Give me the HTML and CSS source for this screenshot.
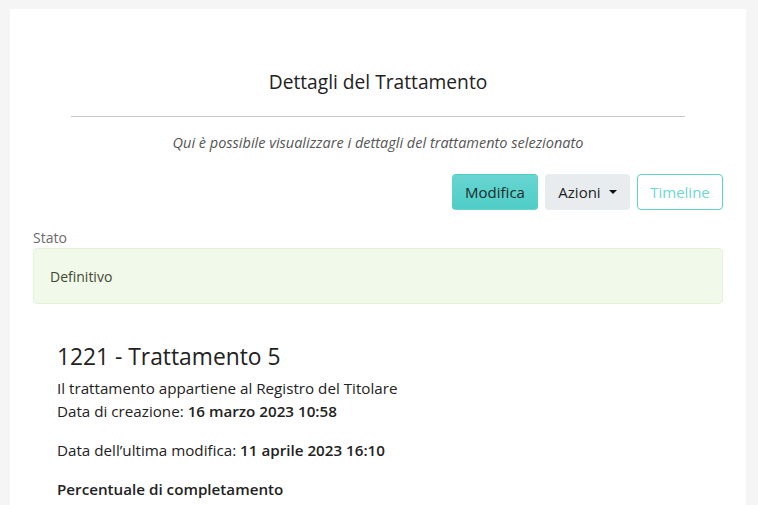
FILE: index.html
```html
<!DOCTYPE html>
<html lang="it">
<head>
<meta charset="utf-8">
<title>Dettagli del Trattamento</title>
<link rel="stylesheet" href="styles.css">
</head>
<body>
<div class="page">
  <div class="card">
    <div class="header">
      <h1 class="title">Dettagli del Trattamento</h1>
      <hr class="divider">
      <p class="subtitle">Qui è possibile visualizzare i dettagli del trattamento selezionato</p>
    </div>
    <div class="toolbar">
      <button class="btn btn-primary">Modifica</button>
      <button class="btn btn-light">Azioni <span class="caret"></span></button>
      <button class="btn btn-outline">Timeline</button>
    </div>
    <div class="status">
      <div class="status-label">Stato</div>
      <div class="status-box">Definitivo</div>
    </div>
    <div class="details">
      <h2 class="name">1221 - Trattamento 5</h2>
      <p class="line">Il trattamento appartiene al Registro del Titolare</p>
      <p class="line">Data di creazione: <strong>16 marzo 2023 10:58</strong></p>
      <p class="line gap">Data dell’ultima modifica: <strong>11 aprile 2023 16:10</strong></p>
      <p class="line gap"><strong>Percentuale di completamento</strong></p>
    </div>
  </div>
</div>
</body>
</html>
```

FILE: styles.css
```css
html, body {
  margin: 0;
  padding: 0;
  background: #f5f5f5;
  font-family: "Open Sans", "DejaVu Sans", sans-serif;
  color: #222;
}
.page {
  padding: 9px 12px 0 10px;
}
.card {
  background: #fff;
  padding: 60px 23px 0 23px;
  min-height: 520px;
}
.header {
  padding: 0 38px;
  text-align: center;
}
.title {
  font-size: 19.2px;
  font-weight: 400;
  margin: 0;
  line-height: 26px;
  color: #222;
}
.divider {
  border: 0;
  border-top: 1px solid #c8c8c8;
  margin: 21px 0 0 0;
}
.subtitle {
  font-style: italic;
  font-size: 14.5px;
  color: #555;
  margin: 15px 0 0 0;
  line-height: 22px;
}
.toolbar {
  display: flex;
  justify-content: flex-end;
  gap: 7px;
  margin-top: 20px;
}
.btn {
  font-family: "Open Sans", sans-serif;
  font-size: 15px;
  height: 36px;
  padding: 0 10px;
  border-radius: 4px;
  border: 1px solid transparent;
  display: inline-flex;
  align-items: center;
  gap: 6px;
}
.btn-primary {
  background: linear-gradient(#68d5d1, #4fcdc7);
  color: #1d2b2b;
  width: 86px;
  justify-content: center;
}
.btn-light {
  background: #e9ecef;
  color: #222;
  width: 85px;
  justify-content: center;
}
.caret {
  width: 0;
  height: 0;
  border-left: 4px solid transparent;
  border-right: 4px solid transparent;
  border-top: 4px solid #111;
  margin-left: 2px;
}
.btn-outline {
  background: #fff;
  border-color: #5bd0cc;
  color: #6fd7d3;
  width: 86px;
  justify-content: center;
}
.status {
  margin-top: 18px;
}
.status-label {
  font-size: 14px;
  color: #6b6b6b;
  line-height: 20px;
}
.status-box {
  margin-top: 0;
  background: #f1f9ea;
  border: 1px solid #e3f1d7;
  border-radius: 4px;
  height: 54px;
  display: flex;
  align-items: center;
  padding: 0 16px;
  font-size: 14px;
  color: #3f4a32;
}
.details {
  padding: 38px 24px 0 24px;
}
.name {
  font-size: 22.8px;
  font-weight: 400;
  margin: 0;
  line-height: 30px;
  color: #222;
}
.line {
  font-size: 15.2px;
  margin: 0;
  line-height: 23px;
  color: #222;
}
.line strong {
  font-weight: 600;
}
.gap {
  margin-top: 16px;
}
.name + .line {
  margin-top: 5px;
}
```
